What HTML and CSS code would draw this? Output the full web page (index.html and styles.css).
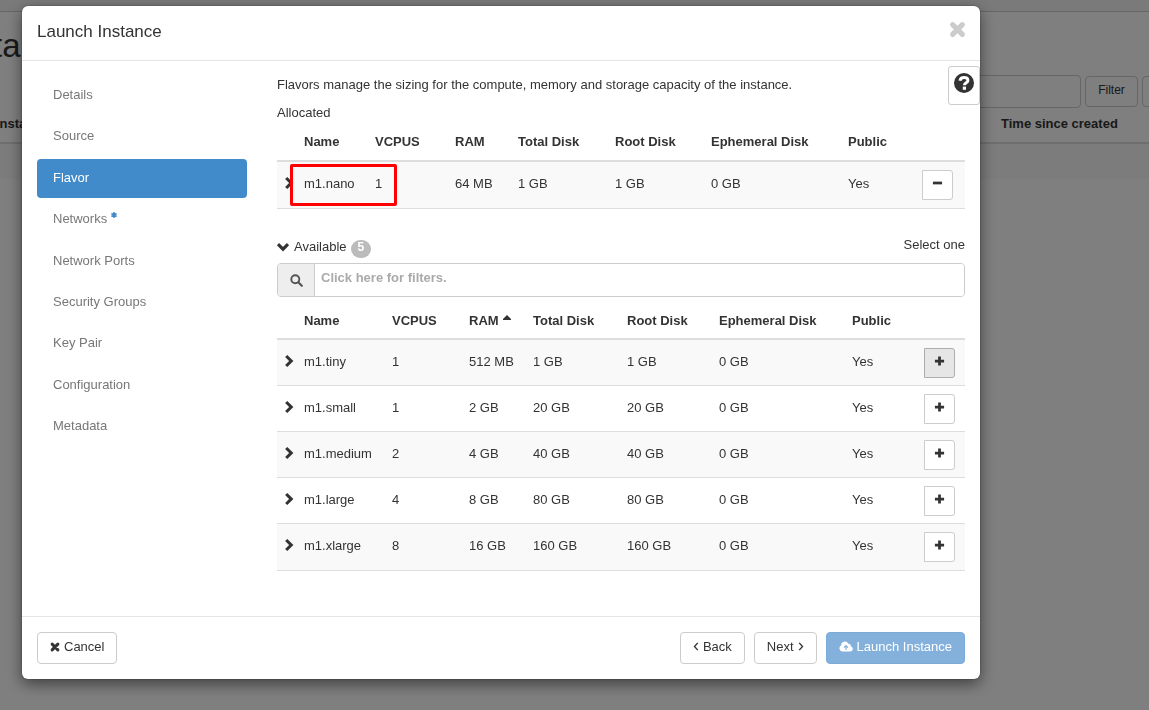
FILE: index.html
```html
<!DOCTYPE html>
<html lang="en">
<head>
<meta charset="utf-8">
<title>Launch Instance</title>
<link rel="stylesheet" href="styles.css">
</head>
<body>
<svg class="defs" aria-hidden="true">
  <symbol id="times" viewBox="0 0 14 14"><path d="M3 3l8 8M11 3l-8 8" stroke="currentColor" stroke-width="4.200" stroke-linecap="round"/></symbol>
  <symbol id="chevron" viewBox="0 0 12 14"><path d="M3.200 2l5 5-5 5" fill="none" stroke="currentColor" stroke-width="3.100"/></symbol>
  <symbol id="plus" viewBox="0 0 12 12"><path d="M6 1v10M1 6h10" stroke="currentColor" stroke-width="3"/></symbol>
  <symbol id="angle" viewBox="0 0 6 10"><path d="M1 1l3.700 4L1 9" fill="none" stroke="currentColor" stroke-width="1.500"/></symbol>
</svg>

<div class="page">
  <div class="topbar"></div>
  <h1 class="page-title">Instances</h1>
  <div class="page-tools">
    <input class="page-search" type="text" aria-label="Search">
    <button class="page-btn" type="button">Filter</button>
    <button class="page-btn" type="button" aria-label="Launch"></button>
  </div>
  <table class="page-table">
    <thead><tr><th>Instance Name</th><th>Time since created</th></tr></thead>
    <tbody><tr><td></td><td></td></tr></tbody>
  </table>
</div>

<div class="backdrop">
  <div class="modal" role="dialog" aria-labelledby="title">
    <header class="modal-header">
      <h2 class="modal-title" id="title">Launch Instance</h2>
      <button class="close" type="button" aria-label="Close"><svg width="17" height="17"><use href="#times"/></svg></button>
    </header>

    <div class="modal-body">
      <nav>
        <ul class="steps">
          <li><a class="step" href="#">Details</a></li>
          <li><a class="step" href="#">Source</a></li>
          <li><a class="step active" href="#">Flavor</a></li>
          <li><a class="step" href="#">Networks <svg class="required" width="6" height="6" viewBox="0 0 6 6"><path d="M3 0v6M.4 1.500l5.200 3M5.600 1.500l-5.200 3" stroke="currentColor" stroke-width="1.500"/></svg></a></li>
          <li><a class="step" href="#">Network Ports</a></li>
          <li><a class="step" href="#">Security Groups</a></li>
          <li><a class="step" href="#">Key Pair</a></li>
          <li><a class="step" href="#">Configuration</a></li>
          <li><a class="step" href="#">Metadata</a></li>
        </ul>
      </nav>

      <main class="content">
        <p class="intro">Flavors manage the sizing for the compute, memory and storage capacity of the instance.</p>
        <p class="intro">Allocated</p>
        <div class="allocated">
          <table class="flavors">
            <colgroup><col class="w27"><col class="w71"><col class="w80"><col class="w63"><col class="w97"><col class="w96"><col class="w137"><col class="w74"><col class="w43"></colgroup>
            <thead><tr><th></th><th>Name</th><th>VCPUS</th><th>RAM</th><th>Total Disk</th><th>Root Disk</th><th>Ephemeral Disk</th><th>Public</th><th></th></tr></thead>
            <tbody>
              <tr><td class="toggle"><svg width="12" height="14"><use href="#chevron"/></svg></td><td>m1.nano</td><td>1</td><td>64 MB</td><td>1 GB</td><td>1 GB</td><td>0 GB</td><td>Yes</td><td class="action"><button class="row-btn" type="button" aria-label="Remove m1.nano"><svg width="11" height="12" viewBox="0 0 12 12"><path d="M1 6h10" stroke="currentColor" stroke-width="3"/></svg></button></td></tr>
            </tbody>
          </table>
          <div class="highlight"></div>
        </div>

        <div class="available">
          <span class="available-label"><svg class="open" width="12" height="14"><use href="#chevron"/></svg>Available</span>
          <span class="badge">5</span>
          <span class="select-one">Select one</span>
        </div>
        <div class="search">
          <span class="search-icon"><svg width="13" height="13" viewBox="0 0 13 13"><circle cx="5.300" cy="5.300" r="4" fill="none" stroke="currentColor" stroke-width="1.900"/><path d="M8.300 8.300l3.500 3.500" stroke="currentColor" stroke-width="2.200" stroke-linecap="round"/></svg></span>
          <input class="search-input" type="text" placeholder="Click here for filters." aria-label="Filters">
        </div>

        <table class="flavors list">
          <colgroup><col class="w27"><col class="w88"><col class="w77"><col class="w64"><col class="w94"><col class="w92"><col class="w133"><col class="w72"><col class="w41"></colgroup>
          <thead><tr><th></th><th>Name</th><th>VCPUS</th><th>RAM <svg class="sort" width="8" height="5" viewBox="0 0 8 5"><path d="M0 5V4l4-4 4 4v1z" fill="currentColor"/></svg></th><th>Total Disk</th><th>Root Disk</th><th>Ephemeral Disk</th><th>Public</th><th></th></tr></thead>
          <tbody>
            <tr><td class="toggle"><svg width="12" height="14"><use href="#chevron"/></svg></td><td>m1.tiny</td><td>1</td><td>512 MB</td><td>1 GB</td><td>1 GB</td><td>0 GB</td><td>Yes</td><td class="action"><button class="row-btn pressed" type="button" aria-label="Add m1.tiny"><svg width="11" height="12"><use href="#plus"/></svg></button></td></tr>
            <tr><td class="toggle"><svg width="12" height="14"><use href="#chevron"/></svg></td><td>m1.small</td><td>1</td><td>2 GB</td><td>20 GB</td><td>20 GB</td><td>0 GB</td><td>Yes</td><td class="action"><button class="row-btn" type="button" aria-label="Add m1.small"><svg width="11" height="12"><use href="#plus"/></svg></button></td></tr>
            <tr><td class="toggle"><svg width="12" height="14"><use href="#chevron"/></svg></td><td>m1.medium</td><td>2</td><td>4 GB</td><td>40 GB</td><td>40 GB</td><td>0 GB</td><td>Yes</td><td class="action"><button class="row-btn" type="button" aria-label="Add m1.medium"><svg width="11" height="12"><use href="#plus"/></svg></button></td></tr>
            <tr><td class="toggle"><svg width="12" height="14"><use href="#chevron"/></svg></td><td>m1.large</td><td>4</td><td>8 GB</td><td>80 GB</td><td>80 GB</td><td>0 GB</td><td>Yes</td><td class="action"><button class="row-btn" type="button" aria-label="Add m1.large"><svg width="11" height="12"><use href="#plus"/></svg></button></td></tr>
            <tr><td class="toggle"><svg width="12" height="14"><use href="#chevron"/></svg></td><td>m1.xlarge</td><td>8</td><td>16 GB</td><td>160 GB</td><td>160 GB</td><td>0 GB</td><td>Yes</td><td class="action"><button class="row-btn" type="button" aria-label="Add m1.xlarge"><svg width="11" height="12"><use href="#plus"/></svg></button></td></tr>
          </tbody>
        </table>
      </main>

      <button class="help" type="button" aria-label="Help"><svg width="20" height="20" viewBox="0 0 20 20"><circle cx="10" cy="10" r="10" fill="#333"/><path d="M6 7.800C6.400 5.400 7.800 4.600 10 4.600c2.400 0 3.900 1.100 3.900 2.800 0 2.400-3.500 2.300-3.500 4.900" fill="none" stroke="#fff" stroke-width="3"/><path d="M8.800 13.600h3.200v3.200h-3.200z" fill="#fff"/></svg></button>
    </div>

    <footer class="modal-footer">
      <button class="btn cancel" type="button"><svg width="10" height="10"><use href="#times"/></svg>Cancel</button>
      <button class="btn" type="button"><svg class="flip" width="6" height="9"><use href="#angle"/></svg>Back</button>
      <button class="btn" type="button">Next<svg width="6" height="9"><use href="#angle"/></svg></button>
      <button class="btn primary" type="button" disabled><svg width="14" height="11" viewBox="0 0 14 11"><path d="M3.300 10.500A3.200 3.200 0 0 1 2.100 4.500 3.800 3.800 0 0 1 9.300 2.700a2.300 2.300 0 0 1 2.500 2.500 2.700 2.700 0 0 1-.8 5.300z" fill="#fff"/><path d="M7 9V5M5 6.700l2-2 2 2" fill="none" stroke="#83b1dc" stroke-width="1.200"/></svg>Launch Instance</button>
    </footer>
  </div>
</div>
</body>
</html>
```
FILE: styles.css
```css
* { box-sizing: border-box; }
body {
  margin: 0;
  min-height: 100vh;
  overflow: hidden;
  background: #fff;
  color: #333;
  font: 13px/18px "Liberation Sans", Arial, sans-serif;
}
h1, h2, p, ul { margin: 0; padding: 0; font-weight: 400; }
button, input { font: inherit; color: inherit; }
button { cursor: pointer; }
svg { flex: none; }
.defs { position: absolute; width: 0; height: 0; }

/* Page under the dialog */
.page { position: absolute; inset: 0; overflow: hidden; }
.topbar { height: 12px; background: #f4f4f4; border-bottom: 1px solid #ccc; }
.page-title { margin-left: -51px; padding-top: 14px; font-size: 33px; line-height: 40px; }
.page-tools { display: flex; align-items: center; gap: 4px; margin: 9px -59px 0 600px; }
.page-search { flex: 1; height: 33px; border: 1px solid #ccc; border-radius: 4px; background: #fff; }
.page-btn { width: 53px; height: 31px; padding: 0 0 3px; border: 1px solid #ccc; border-radius: 4px; background: #fff; font-size: 12px; }
.page-btn + .page-btn { width: 66px; }
.page-table { width: calc(100% + 8px); margin-left: -4px; border-collapse: separate; border-spacing: 0; table-layout: fixed; }
.page-table th { height: 36px; padding: 0 0 2px; text-align: left; border-bottom: 2px solid #ddd; }
.page-table th:last-child { width: 152px; }
.page-table td { height: 35px; background: #f9f9f9; }

/* Dialog */
.backdrop { position: fixed; inset: 0; padding: 6px 169px 31px 22px; background: rgba(0, 0, 0, .5); }
.modal { display: flex; flex-direction: column; min-height: 100%; background: #fff; border-radius: 6px; box-shadow: 0 5px 15px rgba(0, 0, 0, .5), 0 0 2px rgba(0, 0, 0, .4); }
.modal-header { display: flex; justify-content: space-between; align-items: flex-start; padding: 15px 14px 17px 15px; border-bottom: 1px solid #e5e5e5; }
.modal-title { font-size: 17px; line-height: 22px; }
.close { display: flex; padding: 0; border: 0; background: none; color: #ccc; }
.modal-body { position: relative; flex: 1; display: flex; gap: 30px; padding: 15px; }
.steps { display: flex; flex-direction: column; justify-content: space-between; width: 210px; height: 370px; list-style: none; }
.step { display: block; padding: 10px 16px 11px; border-radius: 4px; color: #777; text-decoration: none; }
.step.active { background: #428bca; color: #fff; }
.required { vertical-align: 5px; color: #428bca; }
.content { flex: 1; min-width: 0; }
.intro { margin-bottom: 10px; }
.help { position: absolute; top: 5px; right: 0; display: flex; justify-content: center; width: 32px; height: 39px; padding: 6px 0 11px; border: 1px solid #ccc; border-radius: 3px; background: #fff; }

.allocated { position: relative; }
.highlight { position: absolute; top: 32px; left: 13px; width: 107px; height: 42px; border: 3px solid #f00; border-radius: 2px; }

.flavors { width: 100%; border-collapse: separate; border-spacing: 0; table-layout: fixed; }
.flavors th { height: 30px; padding: 0 0 9px; border-bottom: 2px solid #ddd; text-align: left; white-space: nowrap; }
.flavors td { height: 47px; padding: 13px 0 0; border-bottom: 1px solid #ddd; vertical-align: top; white-space: nowrap; }
.flavors tbody tr:nth-child(odd) { background: #f9f9f9; }
.flavors .toggle { padding: 14px 0 0 6px; }
.flavors .action { padding-top: 8px; }
.toggle svg { display: block; }
.row-btn { display: flex; justify-content: center; width: 31px; height: 30px; padding: 6px 0 10px; border: 1px solid #ccc; border-radius: 0 3px 3px 0; background: #fff; }
.row-btn.pressed { border-color: #adadad; background: #e6e6e6; }
.list th { height: 43px; padding-bottom: 8px; vertical-align: bottom; }
.list td { height: 46px; }
.list tr:last-child td { height: 47px; }
.sort { margin-left: 1px; vertical-align: 5px; }

.available { display: flex; align-items: center; gap: 4px; margin-top: 28px; height: 26px; }
.available-label { display: flex; align-items: center; gap: 5px; padding-bottom: 6px; }
.open { transform: rotate(90deg); }
.badge { margin-bottom: 2px; padding: 0 7px 3px; border-radius: 10px; background: #bbb; color: #fff; font-size: 12px; font-weight: 700; line-height: 15px; }
.select-one { margin-left: auto; padding-bottom: 10px; }

.search { display: flex; height: 34px; border: 1px solid #ccc; border-radius: 4px; overflow: hidden; }
.search-icon { display: flex; align-items: center; justify-content: center; width: 37px; border-right: 1px solid #ccc; background: #eee; color: #555; }
.search-input { flex: 1; padding: 0 6px 4px; border: 0; outline: 0; font-weight: 700; }
.search-input::placeholder { color: #aaa; opacity: 1; }

.modal-footer { display: flex; gap: 9px; padding: 15px; border-top: 1px solid #e5e5e5; }
.btn { display: flex; align-items: center; gap: 4px; height: 32px; padding: 0 12px 3px; border: 1px solid #ccc; border-radius: 4px; background: #fff; }
.btn.primary { border-color: #7bacd9; background: #83b1dc; color: #fff; }
.cancel { margin-right: auto; }
.flip { transform: scaleX(-1); }

.w27 { width: 27px; } .w41 { width: 41px; } .w43 { width: 43px; }
.w63 { width: 63px; } .w64 { width: 64px; } .w71 { width: 71px; }
.w72 { width: 72px; } .w74 { width: 74px; } .w77 { width: 77px; }
.w80 { width: 80px; } .w88 { width: 88px; } .w92 { width: 92px; }
.w94 { width: 94px; } .w96 { width: 96px; } .w97 { width: 97px; }
.w133 { width: 133px; } .w137 { width: 137px; }
```
